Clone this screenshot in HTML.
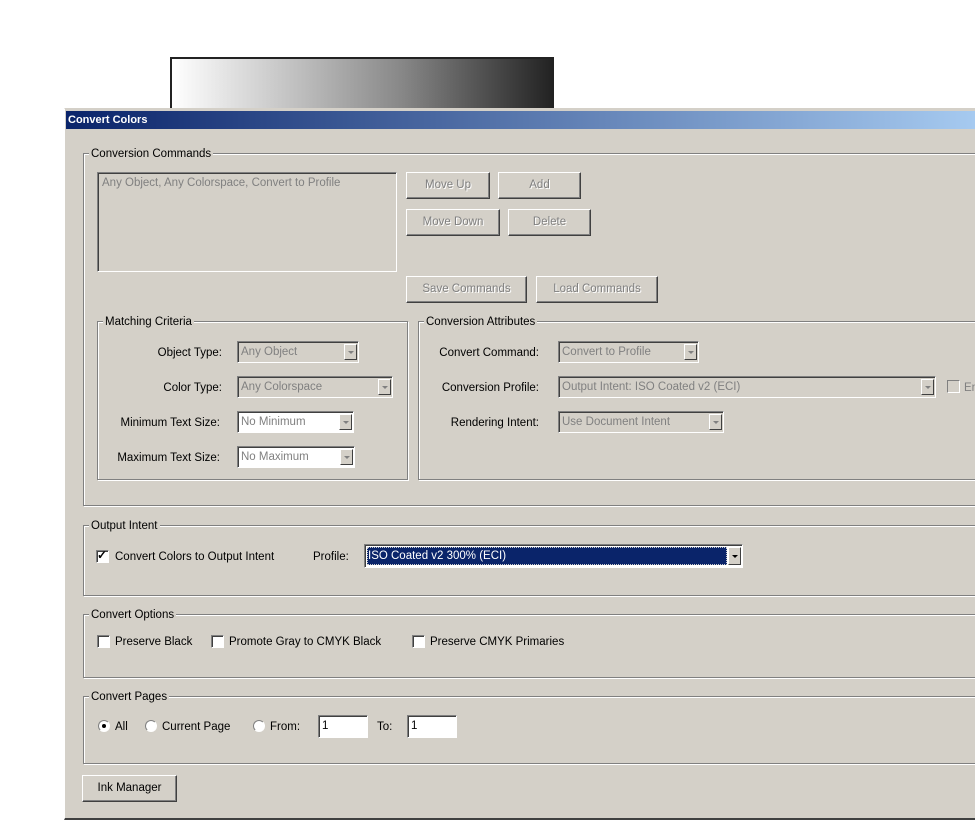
<!DOCTYPE html>
<html><head><style>
*{margin:0;padding:0;box-sizing:border-box}
body{width:975px;height:834px;background:#fff;position:relative;overflow:hidden;font-family:"Liberation Sans",sans-serif;font-size:11.5px;color:#000}
.a{position:absolute}
.dlg{left:64px;top:108px;width:915px;height:712px;background:#d4d0c8;border-left:1px solid #fff;border-top:1px solid #d4d0c8;border-bottom:2px solid #404040;box-shadow:inset 1px 0 0 #d4d0c8}
.title{left:66px;top:111px;width:909px;height:18px;background:linear-gradient(to right,#0a246a,#a6caf0);color:#fff;font-weight:bold;font-size:11px;line-height:19px;padding-left:2px}
.grp{position:absolute;border:1px solid #808080;box-shadow:1px 1px 0 #fff,inset 1px 1px 0 #fff}
.lg{position:absolute;background:#d4d0c8;padding:0 2px;top:-7px;left:5px;line-height:14px}
.btn{position:absolute;background:#d4d0c8;border:1px solid;border-color:#fff #404040 #404040 #fff;box-shadow:inset -1px -1px 0 #808080;text-align:center;color:#808080;text-shadow:1px 1px 0 #fff;line-height:24px}
.btn.en{color:#000;text-shadow:none}
.lbl{position:absolute;text-align:right;line-height:22px}
.cmb{position:absolute;height:22px;border:1px solid;border-color:#808080 #fff #fff #808080;box-shadow:inset 1px 1px 0 #404040;color:#808080;line-height:21px;padding-left:3px;background:#d4d0c8}
.cmb.w{background:#fff}
.cmb i{position:absolute;right:1px;top:2px;width:13px;height:16px;background:#d4d0c8;border:1px solid;border-color:#fff #404040 #404040 #fff}
.cmb i:after{content:"";position:absolute;left:3px;top:6px;border:3px solid transparent;border-top:3px solid #808080}
.cb{position:absolute;width:13px;height:13px;background:#fff;border:1px solid;border-color:#808080 #fff #fff #808080;box-shadow:inset 1px 1px 0 #404040}
.rd{position:absolute;width:12px;height:12px;border-radius:50%;background:#fff;border:1px solid;border-color:#808080 #fff #fff #808080}
.t{position:absolute;line-height:16px;white-space:nowrap}
.ed{position:absolute;height:23px;background:#fff;border:1px solid;border-color:#808080 #fff #fff #808080;box-shadow:inset 1px 1px 0 #404040;padding-left:3px;line-height:21px}
</style></head><body>
<div class="a" style="left:170px;top:57px;width:384px;height:52px;border:2px solid #222;border-bottom:none;border-right:1px solid #222;background:linear-gradient(to right,#fff,#bbb 35%,#888 60%,#222)"></div>
<div class="a dlg"></div>
<div class="a title">Convert Colors</div>

<div class="grp" style="left:83px;top:153px;width:900px;height:353px"><span class="lg">Conversion Commands</span></div>
<div class="a" style="left:97px;top:172px;width:300px;height:100px;border:1px solid;border-color:#808080 #fff #fff #808080;box-shadow:inset 1px 1px 0 #404040;color:#808080;padding:4px 4px">Any Object, Any Colorspace, Convert to Profile</div>
<div class="btn" style="left:406px;top:172px;width:84px;height:27px">Move Up</div>
<div class="btn" style="left:498px;top:172px;width:83px;height:27px">Add</div>
<div class="btn" style="left:406px;top:209px;width:94px;height:27px">Move Down</div>
<div class="btn" style="left:508px;top:209px;width:83px;height:27px">Delete</div>
<div class="btn" style="left:406px;top:276px;width:121px;height:27px">Save Commands</div>
<div class="btn" style="left:536px;top:276px;width:122px;height:27px">Load Commands</div>

<div class="grp" style="left:97px;top:321px;width:311px;height:159px"><span class="lg">Matching Criteria</span></div>
<div class="lbl" style="left:100px;top:342px;width:122px">Object Type:</div>
<div class="cmb" style="left:237px;top:341px;width:122px">Any Object<i></i></div>
<div class="lbl" style="left:100px;top:377px;width:122px">Color Type:</div>
<div class="cmb" style="left:237px;top:376px;width:156px">Any Colorspace<i></i></div>
<div class="lbl" style="left:100px;top:412px;width:120px">Minimum Text Size:</div>
<div class="cmb w" style="left:237px;top:411px;width:117px">No Minimum<i></i></div>
<div class="lbl" style="left:100px;top:447px;width:120px">Maximum Text Size:</div>
<div class="cmb w" style="left:237px;top:446px;width:118px">No Maximum<i></i></div>

<div class="grp" style="left:418px;top:321px;width:570px;height:159px"><span class="lg">Conversion Attributes</span></div>
<div class="lbl" style="left:420px;top:342px;width:119px">Convert Command:</div>
<div class="cmb" style="left:558px;top:341px;width:141px">Convert to Profile<i></i></div>
<div class="lbl" style="left:420px;top:377px;width:119px">Conversion Profile:</div>
<div class="cmb" style="left:558px;top:376px;width:378px">Output Intent: ISO Coated v2 (ECI)<i></i></div>
<div class="cb" style="left:947px;top:380px;box-shadow:none;background:#d4d0c8"></div>
<div class="t" style="left:964px;top:380px;color:#808080">En</div>
<div class="lbl" style="left:420px;top:412px;width:119px">Rendering Intent:</div>
<div class="cmb" style="left:558px;top:411px;width:166px">Use Document Intent<i></i></div>

<div class="grp" style="left:83px;top:525px;width:900px;height:71px"><span class="lg">Output Intent</span></div>
<div class="cb" style="left:96px;top:550px"><span style="position:absolute;left:0;top:-3px;font-size:12px;font-weight:bold">✓</span></div>
<div class="t" style="left:115px;top:549px">Convert Colors to Output Intent</div>
<div class="t" style="left:313px;top:549px">Profile:</div>
<div class="a" style="left:364px;top:544px;width:379px;height:24px;border:1px solid;border-color:#808080 #fff #fff #808080;box-shadow:inset 1px 1px 0 #404040;background:#fff">
<div class="a" style="left:2px;top:2px;width:360px;height:18px;background:#0a246a;color:#fff;line-height:18px;padding-left:1px;outline:1px dotted #ccc;outline-offset:-1px">ISO Coated v2 300% (ECI)</div>
<div class="a" style="right:1px;top:2px;width:13px;height:18px;background:#d4d0c8;border:1px solid;border-color:#fff #404040 #404040 #fff"><div style="position:absolute;left:3px;top:7px;border:3px solid transparent;border-top:3px solid #000"></div></div></div>

<div class="grp" style="left:83px;top:614px;width:900px;height:64px"><span class="lg">Convert Options</span></div>
<div class="cb" style="left:97px;top:635px"></div><div class="t" style="left:115px;top:634px">Preserve Black</div>
<div class="cb" style="left:211px;top:635px"></div><div class="t" style="left:229px;top:634px">Promote Gray to CMYK Black</div>
<div class="cb" style="left:412px;top:635px"></div><div class="t" style="left:430px;top:634px">Preserve CMYK Primaries</div>

<div class="grp" style="left:83px;top:696px;width:900px;height:68px"><span class="lg">Convert Pages</span></div>
<div class="rd" style="left:98px;top:720px"><span style="position:absolute;left:3px;top:3px;width:4px;height:4px;background:#000;border-radius:50%"></span></div>
<div class="t" style="left:115px;top:719px">All</div>
<div class="rd" style="left:145px;top:720px"></div><div class="t" style="left:162px;top:719px">Current Page</div>
<div class="rd" style="left:253px;top:720px"></div><div class="t" style="left:270px;top:719px">From:</div>
<div class="ed" style="left:318px;top:715px;width:50px">1</div>
<div class="t" style="left:377px;top:719px">To:</div>
<div class="ed" style="left:407px;top:715px;width:50px">1</div>

<div class="btn en" style="left:82px;top:775px;width:95px;height:27px">Ink Manager</div>
</body></html>
